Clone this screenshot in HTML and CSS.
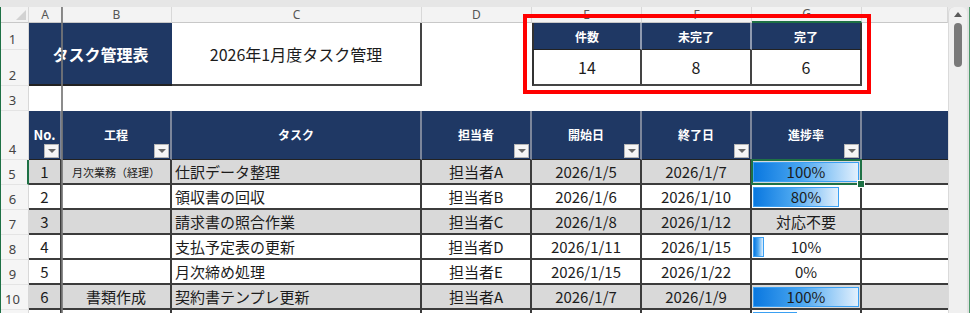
FILE: index.html
```html
<!doctype html>
<html lang="ja">
<head>
	<meta charset="UTF-8" />
	<title>タスク管理表</title>
	<link rel="stylesheet" href="styles.css">
</head>
<body>
    <!--ウィンドウ-->
    <div class="window">
        <div class="topband"></div>
        <div class="main">
            <div class="edge"></div>
            <!--シート本体-->
            <div class="sheet">
                <!--列見出し-->
                <div class="colhdr corner"><i></i></div>
                <div class="colhdr">A</div>
                <div class="colhdr">B</div>
                <div class="colhdr">C</div>
                <div class="colhdr">D</div>
                <div class="colhdr">E</div>
                <div class="colhdr">F</div>
                <div class="colhdr active">G</div>
                <div class="colhdr"></div>

                <!--1行目・2行目-->
                <div class="rowhdr">1</div>
                <div class="title">タスク管理表</div>
                <div class="subtitle">2026年1月度タスク管理</div>
                <div class="blank2"></div>
                <div class="sum-h first">件数</div>
                <div class="sum-h">未完了</div>
                <div class="sum-h last">完了</div>
                <div class="blank"></div>

                <div class="rowhdr">2</div>
                <div class="sum-v first">14</div>
                <div class="sum-v">8</div>
                <div class="sum-v">6</div>
                <div class="blank"></div>

                <!--3行目-->
                <div class="rowhdr">3</div>
                <div class="blank span8"></div>

                <!--表の見出し-->
                <div class="rowhdr">4</div>
                <div class="th no">No.<b class="filter"></b></div>
                <div class="th">工程<b class="filter"></b></div>
                <div class="th">タスク</div>
                <div class="th">担当者<b class="filter"></b></div>
                <div class="th">開始日<b class="filter"></b></div>
                <div class="th">終了日<b class="filter"></b></div>
                <div class="th">進捗率<b class="filter"></b></div>
                <div class="th last"></div>

                <!--データ-->
                <div class="row gray">
                    <div class="rowhdr active">5</div>
                    <div class="td">1</div>
                    <div class="td small">月次業務（経理）</div>
                    <div class="td left">仕訳データ整理</div>
                    <div class="td">担当者A</div>
                    <div class="td">2026/1/5</div>
                    <div class="td">2026/1/7</div>
                    <div class="td prog sel"><i class="bar" style="width:106px"></i><span>100%</span></div>
                    <div class="td last"></div>
                </div>
                <div class="row">
                    <div class="rowhdr">6</div>
                    <div class="td">2</div>
                    <div class="td"></div>
                    <div class="td left">領収書の回収</div>
                    <div class="td">担当者B</div>
                    <div class="td">2026/1/6</div>
                    <div class="td">2026/1/10</div>
                    <div class="td prog"><i class="bar" style="width:86px"></i><span>80%</span></div>
                    <div class="td last"></div>
                </div>
                <div class="row gray">
                    <div class="rowhdr">7</div>
                    <div class="td">3</div>
                    <div class="td"></div>
                    <div class="td left">請求書の照合作業</div>
                    <div class="td">担当者C</div>
                    <div class="td">2026/1/8</div>
                    <div class="td">2026/1/12</div>
                    <div class="td">対応不要</div>
                    <div class="td last"></div>
                </div>
                <div class="row">
                    <div class="rowhdr">8</div>
                    <div class="td">4</div>
                    <div class="td"></div>
                    <div class="td left">支払予定表の更新</div>
                    <div class="td">担当者D</div>
                    <div class="td">2026/1/11</div>
                    <div class="td">2026/1/15</div>
                    <div class="td prog"><i class="bar" style="width:11px"></i><span>10%</span></div>
                    <div class="td last"></div>
                </div>
                <div class="row">
                    <div class="rowhdr">9</div>
                    <div class="td">5</div>
                    <div class="td"></div>
                    <div class="td left">月次締め処理</div>
                    <div class="td">担当者E</div>
                    <div class="td">2026/1/15</div>
                    <div class="td">2026/1/22</div>
                    <div class="td">0%</div>
                    <div class="td last"></div>
                </div>
                <div class="row gray">
                    <div class="rowhdr">10</div>
                    <div class="td">6</div>
                    <div class="td">書類作成</div>
                    <div class="td left">契約書テンプレ更新</div>
                    <div class="td">担当者A</div>
                    <div class="td">2026/1/7</div>
                    <div class="td">2026/1/9</div>
                    <div class="td prog"><i class="bar" style="width:106px"></i><span>100%</span></div>
                    <div class="td last"></div>
                </div>
                <div class="row">
                    <div class="rowhdr"></div>
                    <div class="td"></div>
                    <div class="td"></div>
                    <div class="td left"></div>
                    <div class="td"></div>
                    <div class="td"></div>
                    <div class="td"></div>
                    <div class="td prog"><i class="bar" style="width:44px"></i></div>
                    <div class="td last"></div>
                </div>
            </div>
            <!--スクロールバー-->
            <div class="vscroll">
                <i class="up"></i>
                <i class="thumb"></i>
            </div>
            <div class="edge-r"></div>
        </div>
        <!--ウィンドウ枠固定の線-->
        <div class="freeze"></div>
        <!--赤枠-->
        <div class="callout"></div>
    </div>
</body>
</html>
```

FILE: styles.css
```css
* {
    padding: 0;
    margin: 0;
    box-sizing: border-box;
}

body {
    width: 970px;
    height: 313px;
    overflow: hidden;
    background: #fff;
    font-family: "Noto Sans CJK JP", "Noto Sans", sans-serif;
    color: #1c1c1c;
}

.window {
    position: relative;
    height: 313px;
    background: #e8e8e8;
}

.topband {
    height: 7px;
    background: #e6e6e6;
}

.main {
    display: flex;
    height: 306px;
}

.edge {
    width: 1px;
    background: #1e7145;
}

.edge-r {
    width: 3px;
    background: #e2e2e2;
    border-right: 1px solid #4f9a6c;
}

/* シート */
.sheet {
    width: 947px;
    display: grid;
    grid-template-columns: 28px 33px 110px 250px 110px 110px 110px 110px 86px;
    grid-template-rows: 16px 27px 36px 25px 49px repeat(7, 25px);
    background: #fff;
    overflow: hidden;
}

.row {
    display: contents;
}

.colhdr {
    background: #f3f3f3;
    border-right: 1px solid #d8d8d8;
    border-bottom: 1px solid #c8c8c8;
    font-family: "Noto Sans", sans-serif;
    font-size: 12px;
    line-height: 1;
    color: #555;
    display: flex;
    align-items: center;
    justify-content: center;
}

.colhdr.active {
    border-bottom: 2px solid #1e7145;
}

.corner {
    align-items: flex-end;
    justify-content: flex-end;
    padding: 0 2px 2px 0;
}

.corner i {
    width: 0;
    height: 0;
    border-left: 10px solid transparent;
    border-bottom: 10px solid #d2d2d2;
}

.rowhdr {
    background: #f5f5f5;
    border-right: 1px solid #d8d8d8;
    border-bottom: 1px solid #e4e4e4;
    font-family: "Noto Sans", sans-serif;
    font-size: 13px;
    line-height: 1;
    color: #444;
    display: flex;
    align-items: flex-end;
    justify-content: center;
    padding: 0 4px 3px 0;
}

.rowhdr.active {
    border-right: 2px solid #1e7145;
}

.blank2 {
    grid-row: span 2;
}

.span8 {
    grid-column: span 8;
}

/* タイトル */
.title {
    grid-column: span 2;
    grid-row: span 2;
    background: #1f3864;
    color: #fff;
    font-weight: 700;
    font-size: 16px;
    display: flex;
    align-items: center;
    justify-content: center;
    border-bottom: 2px solid #222;
}

.subtitle {
    grid-row: span 2;
    font-size: 16px;
    display: flex;
    align-items: center;
    justify-content: center;
    border-right: 2px solid #444;
    border-bottom: 2px solid #444;
}

/* 集計 */
.sum-h {
    background: #1f3864;
    color: #fff;
    font-weight: 700;
    font-size: 12px;
    display: flex;
    align-items: center;
    justify-content: center;
    border-right: 2px solid #8f9ab0;
    border-bottom: 1px solid #222;
}

.sum-h.first,
.sum-v.first {
    border-left: 2px solid #333;
}

.sum-h.last {
    border-right: 2px solid #333;
}

.sum-v {
    font-size: 16px;
    display: flex;
    align-items: center;
    justify-content: center;
    border-right: 2px solid #444;
    border-bottom: 2px solid #444;
}

/* 表の見出し */
.th {
    position: relative;
    background: #1f3864;
    color: #fff;
    font-weight: 700;
    font-size: 12px;
    display: flex;
    align-items: center;
    justify-content: center;
    padding-bottom: 2px;
    border-right: 2px solid #7c869b;
    border-bottom: 1px solid #222;
}

.th.no {
    font-size: 13px;
}

.th.last {
    border-right: 0;
}

.filter {
    position: absolute;
    right: 1px;
    bottom: 1px;
    width: 15px;
    height: 14px;
    background: #f5f5f5;
    border: 1px solid #b5b5b5;
    display: flex;
    align-items: center;
    justify-content: center;
}

.filter::after {
    content: "";
    border-left: 4px solid transparent;
    border-right: 4px solid transparent;
    border-top: 4px solid #666;
}

/* データ */
.td {
    position: relative;
    font-size: 15px;
    white-space: nowrap;
    display: flex;
    align-items: center;
    justify-content: center;
    border-right: 2px solid #3c3c3c;
    border-bottom: 2px solid #3c3c3c;
}

.gray .td {
    background: #d9d9d9;
}

.td.left {
    justify-content: flex-start;
    padding-left: 3px;
}

.td.small {
    font-size: 11px;
}

.td.last {
    border-right: 0;
}

.bar {
    position: absolute;
    left: 1px;
    top: 2px;
    bottom: 1px;
    background: linear-gradient(to right, #0a78e0, #4aa6f0 45%, #e2f0fd);
    border: 1px solid #3aa0f3;
}

.prog span {
    position: relative;
}

.sel {
    z-index: 2;
}

.sel::after {
    content: "";
    position: absolute;
    left: -1px;
    top: -1px;
    right: -2px;
    bottom: -2px;
    border: 2px solid #1e7145;
}

.sel::before {
    content: "";
    position: absolute;
    right: -5px;
    bottom: -5px;
    width: 6px;
    height: 6px;
    background: #1e7145;
    border: 1px solid #fff;
    z-index: 3;
}

/* スクロールバー */
.vscroll {
    width: 19px;
    background: #f0f0f0;
    border-left: 1px solid #dadada;
    border-radius: 6px 6px 0 0;
    display: flex;
    flex-direction: column;
    align-items: center;
    padding-top: 5px;
}

.up {
    width: 0;
    height: 0;
    border-left: 4px solid transparent;
    border-right: 4px solid transparent;
    border-bottom: 5px solid #5a5a5a;
}

.thumb {
    width: 8px;
    height: 44px;
    margin-top: 6px;
    border-radius: 4px;
    background: #7a7a7a;
}

/* 重なるもの */
.freeze {
    position: absolute;
    left: 61px;
    top: 7px;
    bottom: 0;
    width: 2px;
    background: rgba(120, 120, 120, 0.85);
}

.callout {
    position: absolute;
    left: 523px;
    top: 14px;
    width: 348px;
    height: 80px;
    border: 4px solid #f00;
}
```
